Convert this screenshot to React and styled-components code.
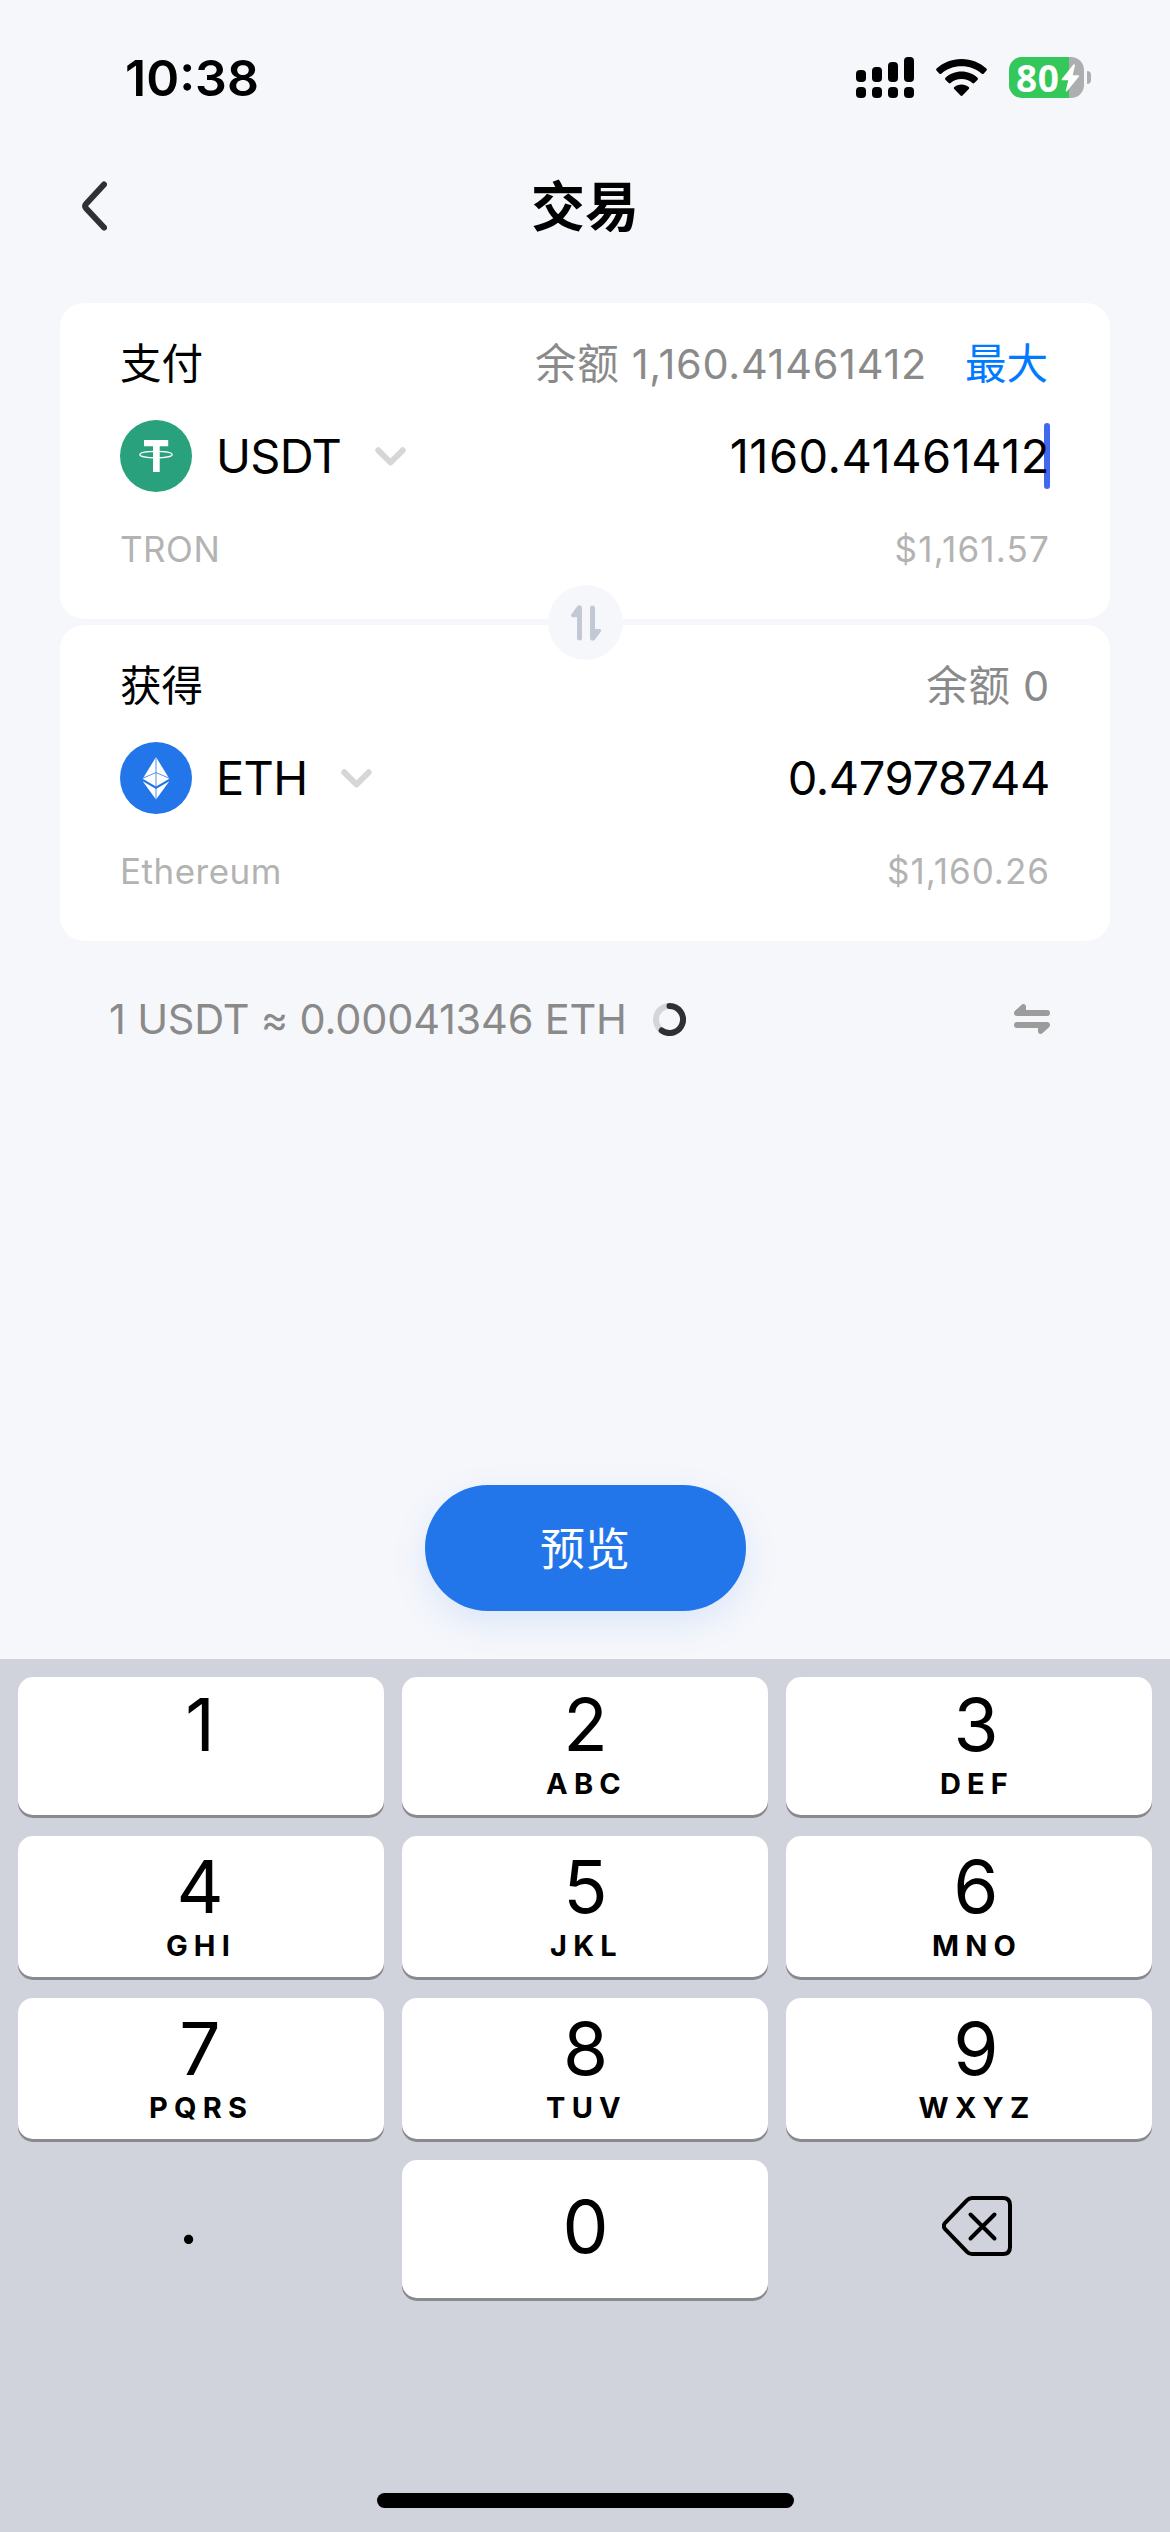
import React, { useState } from 'react';
import styled, { createGlobalStyle } from 'styled-components';

const GlobalStyle = createGlobalStyle`
  * {
    box-sizing: border-box;
  }

  body {
    margin: 0;
    background-color: #f6f7fb;
    color: #000;
    font-family: Inter, "Noto Sans CJK SC", sans-serif;
  }

  button {
    padding: 0;
    border: none;
    background: none;
    font: inherit;
    color: inherit;
  }

  svg {
    display: block;
  }
`;

const Screen = styled.div`
  display: flex;
  flex-direction: column;
  width: 1170px;
  height: 2532px;
  overflow: hidden;
`;

const StatusBar = styled.div`
  display: flex;
  align-items: center;
  justify-content: space-between;
  height: 141px;
  padding: 14px 79px 0 125px;
`;

const Time = styled.span`
  font-size: 50px;
  font-weight: 600;
  line-height: 60px;
`;

const StatusIcons = styled.div`
  display: flex;
  align-items: center;
  gap: 22px;
`;

const Battery = styled.div`
  display: flex;
  align-items: center;
  gap: 3px;
`;

const BatteryBody = styled.div`
  display: flex;
  align-items: center;
  width: 75px;
  height: 41px;
  padding-left: 7px;
  border-radius: 13px;
  background: linear-gradient(to right, #34c759 60px, #adaeb0 60px);
  color: #fff;
`;

const BatteryLevel = styled.span`
  width: 45px;
  font-family: "Noto Sans", sans-serif;
  font-size: 37px;
  font-weight: 700;
  line-height: 41px;
  letter-spacing: 0.5px;
`;

const BatteryCap = styled.div`
  width: 4px;
  height: 13px;
  border-radius: 0 4px 4px 0;
  background-color: #adaeb0;
`;

const Header = styled.div`
  display: grid;
  grid-template-columns: 1fr auto 1fr;
  align-items: center;
  height: 162px;
  padding: 0 82px;
`;

const BackButton = styled.button`
  justify-self: start;
  margin-top: -32px;
`;

const Title = styled.h1`
  margin: -28px 0 0;
  font-size: 54px;
  font-weight: 600;
  line-height: 78px;
`;

const Cards = styled.div`
  position: relative;
  display: flex;
  flex-direction: column;
  gap: 6px;
  margin: 0 60px;
`;

const Card = styled.div`
  display: flex;
  flex-direction: column;
  height: 316px;
  padding: 31px 60px 0;
  border-radius: 24px;
  background-color: #fff;
`;

const CardRow = styled.div`
  display: flex;
  align-items: center;
  justify-content: space-between;
  height: ${(props) => props.$height}px;
`;

const CardLabel = styled.span`
  font-size: 41.5px;
  line-height: 60px;
`;

const Balance = styled.div`
  display: flex;
  gap: 38px;
  padding-right: ${(props) => (props.$hasMax ? 2 : 0)}px;
  color: #8a8a8a;
  font-size: 41.5px;
  line-height: 60px;
  letter-spacing: 0.7px;
`;

const MaxButton = styled.button`
  color: #007aff;
`;

const TokenButton = styled.button`
  display: flex;
  align-items: center;
`;

const Symbol = styled.span`
  margin: 0 34px 0 24px;
  font-size: 47px;
  line-height: 60px;
  letter-spacing: -0.7px;
`;

const Amount = styled.div`
  position: relative;
  z-index: 0;
  font-size: 47px;
  line-height: 66px;
  letter-spacing: ${(props) => props.$spacing}px;
`;

const Cursor = styled.span`
  position: absolute;
  top: 0;
  right: 0;
  z-index: -1;
  width: 6px;
  height: 66px;
  border-radius: 3px;
  background-color: #4169f0;
`;

const SubText = styled.span`
  color: #b3b3b3;
  font-size: 35px;
  line-height: 50px;
  letter-spacing: ${(props) => props.$spacing}px;
`;

const SwapButton = styled.button`
  position: absolute;
  top: 282px;
  left: 488px;
  display: flex;
  align-items: center;
  justify-content: center;
  width: 75px;
  height: 75px;
  border-radius: 50%;
  background-color: #f6f7fb;
`;

const RateRow = styled.div`
  display: flex;
  align-items: center;
  justify-content: space-between;
  height: 156px;
  padding: 0 120px 0 109px;
`;

const Rate = styled.div`
  display: flex;
  align-items: center;
  gap: 26px;
  color: #8a8a8a;
  font-size: 41.5px;
  line-height: 60px;
  letter-spacing: -0.2px;
`;

const PreviewButton = styled.button`
  align-self: center;
  width: 321px;
  height: 126px;
  margin: auto 0 48px;
  padding-bottom: 4px;
  border-radius: 63px;
  background-color: #2376ea;
  box-shadow: 0 12px 36px rgba(35, 118, 234, 0.12);
  color: #fff;
  font-size: 45px;
`;

const Keyboard = styled.div`
  display: flex;
  flex-direction: column;
  align-items: center;
  justify-content: space-between;
  height: 873px;
  padding: 18px 18px 24px;
  background-color: #d0d3dc;
`;

const Keys = styled.div`
  display: grid;
  grid-template-columns: repeat(3, 366px);
  grid-template-rows: 138px 141px 141px 138px;
  gap: 21px 18px;
`;

const Key = styled.button`
  display: flex;
  flex-direction: column;
  align-items: center;
  justify-content: ${(props) => (props.$centered ? 'center' : 'flex-end')};
  padding-bottom: ${(props) => (props.$centered ? 4 : 13)}px;
  border-radius: 15px;
  background-color: #fff;
  box-shadow: 0 3px 0 #898a8e;

  &:nth-child(3n + 2) {
    padding-left: 3px;
  }

  &:nth-child(3n) {
    padding-left: 16px;
  }
`;

const PlainKey = styled(Key)`
  padding-bottom: 7px;
  background: none;
  box-shadow: none;
`;

const Digit = styled.span`
  margin-bottom: ${(props) => (props.$raised ? 2 : 0)}px;
  padding-right: 2px;
  font-size: 73px;
  font-weight: 400;
  line-height: 78px;
`;

const Letters = styled.span`
  height: 36px;
  font-size: 29px;
  font-weight: 700;
  line-height: 36px;
  letter-spacing: 6.2px;
`;

const Point = styled.span`
  padding: 0 25px 14px 0;
  font-size: 70px;
  line-height: 72px;
`;

const HomeIndicator = styled.div`
  width: 417px;
  height: 15px;
  border-radius: 8px;
  background-color: #000;
`;

const SignalIcon = () => (
  <svg width="58" height="41" viewBox="0 0 58 41">
    {[13, 10, 5, 0].map((top, i) => (
      <g key={top}>
        <rect x={i * 16} y={top} width="10" height={25 - top} rx="4" />
        <rect x={i * 16} y="30" width="10" height="11" rx="4" />
      </g>
    ))}
  </svg>
);

const WifiIcon = () => (
  <svg width="51" height="37" viewBox="0 0 51 37">
    <path d="M25.5 0C35.2 0 44 3.7 50.4 9.6c.6.6.6 1.4.1 2L47.6 14.7c-.5.5-1.3.5-1.9 0C40.4 9.9 33.2 7.3 25.5 7.3S10.6 9.9 5.3 14.7c-.6.5-1.4.5-1.9 0L.5 11.6c-.5-.6-.5-1.4.1-2C7 3.7 15.800 0 25.5 0z" />
    <path d="M25.5 12.6c6.2 0 11.8 2.3 16 6.2.6.5.6 1.3.1 1.9l-3.3 3.4c-.5.5-1.3.5-1.9 0-2.9-2.6-6.7-4.1-10.9-4.1s-8 1.5-10.9 4.1c-.6.5-1.4.5-1.9 0l-3.300-3.400c-.5-.6-.5-1.400.1-1.900 4.200-3.900 9.800-6.200 16-6.200z" />
    <path d="M25.5 25.4c2.8 0 5.3 1 7.200 2.700.6.5.6 1.300.1 1.900l-6.300 6.500c-.6.6-1.400.6-2 0L18.200 30c-.5-.6-.5-1.400.1-1.900 1.900-1.700 4.400-2.700 7.200-2.700z" />
  </svg>
);

const BoltIcon = () => (
  <svg width="19" height="28" viewBox="0 0 19 28">
    <path
      d="M12.200.8.800 15.100c-.4.6-.1 1.200.6 1.200h5.900L4.800 26.300c-.3 1.200.7 1.600 1.400.7L18 12.600c.5-.6.200-1.300-.6-1.300h-5.700l2.200-9.700c.2-1.100-.9-1.700-1.700-.8z"
      fill="#fff"
    />
  </svg>
);

const BackIcon = () => (
  <svg width="25" height="50" viewBox="0 0 25 50" fill="none">
    <path
      d="M22 3.500 4.200 22.800c-1.400 1.600-1.400 3.200 0 4.800L22 46.500"
      stroke="#2f3033"
      strokeWidth="6"
      strokeLinecap="round"
    />
  </svg>
);

const ChevronIcon = () => (
  <svg width="31" height="19" viewBox="0 0 31 19" fill="none">
    <path
      d="M3.300 3.300 15.500 15.500 27.700 3.300"
      stroke="#d6d6d6"
      strokeWidth="6"
      strokeLinecap="round"
      strokeLinejoin="round"
    />
  </svg>
);

const TetherIcon = () => (
  <svg width="72" height="72" viewBox="0 0 72 72">
    <circle cx="36" cy="36" r="36" fill="#28a17c" />
    <path d="M24 20h24.200v6.200H39.700V52H33V26.200h-9z" fill="#fff" />
    <ellipse cx="36" cy="34.600" rx="16.200" ry="3.300" fill="none" stroke="#fff" strokeWidth="1.200" />
  </svg>
);

const EthIcon = () => (
  <svg width="72" height="72" viewBox="0 0 72 72">
    <circle cx="36" cy="36" r="36" fill="#2376ea" />
    <path d="M36 15 49.300 36.700 36 44.400 22.700 36.700z" fill="#fff" />
    <path d="M22.700 39.300 36 47l13.300-7.700L36 57.500z" fill="#fff" />
    <path d="M36 15v42.500M22.700 36.200 36 30.600l13.300 5.600" fill="none" stroke="#2376ea" strokeWidth="0.800" />
  </svg>
);

const SwapVerticalIcon = () => (
  <svg width="30" height="36" viewBox="0 0 30 36" fill="#c3c9d4">
    <path d="M6.200 1.200C8-.6 11 .2 11 2.900v30a2.500 2.500 0 0 1-5 0V12.200H1.800c-1.800 0-2.400-1.600-1.300-3z" />
    <path d="M23.800 34.800c-1.800 1.800-4.800 1-4.800-1.700v-30a2.500 2.500 0 0 1 5 0V24h4.200c1.800 0 2.400 1.500 1.300 2.900z" />
  </svg>
);

const SwapHorizontalIcon = () => (
  <svg width="36" height="30" viewBox="0 0 36 30" fill="#9c9c9c">
    <path d="M1 6.800 7.600.8C9.300-.7 12 .3 12 2.600V6h21a3 3 0 0 1 0 6H3C0 12-1 8.900 1 6.800z" />
    <path d="m35 23.200-6.600 6c-1.700 1.500-4.400.5-4.400-1.800V24H3a3 3 0 0 1 0-6h30c3 0 4 3.100 2 5.200z" />
  </svg>
);

const Spinner = () => (
  <svg width="33" height="33" viewBox="0 0 33 33" fill="none" strokeWidth="6">
    <circle cx="16.500" cy="16.500" r="13.500" stroke="#d4d5d7" />
    <path d="M16.500 3a13.500 13.500 0 1 1-7.800 24.500" stroke="#2f3033" strokeLinecap="round" />
  </svg>
);

const BackspaceIcon = () => (
  <svg width="70" height="60" viewBox="0 0 70 60" fill="none" stroke="#000" strokeWidth="4">
    <path d="M30 2h31c4.500 0 7 2.500 7 7v42c0 4.500-2.500 7-7 7H30c-2 0-3.500-.7-4.900-2.200L3.400 33.500c-2-2.200-2-4.800 0-7L25.100 4.200C26.500 2.700 28 2 30 2z" />
    <path d="m28.500 18.500 24 24m0-24-24 24" strokeLinecap="round" />
  </svg>
);

const KEYS = [
  ['1', ''],
  ['2', 'ABC'],
  ['3', 'DEF'],
  ['4', 'GHI'],
  ['5', 'JKL'],
  ['6', 'MNO'],
  ['7', 'PQRS'],
  ['8', 'TUV'],
  ['9', 'WXYZ'],
];

const App = () => {
  const [amount, setAmount] = useState('1160.41461412');

  const handleKey = (key) => {
    setAmount((prev) => prev + key);
  };

  const handleDelete = () => {
    setAmount((prev) => prev.slice(0, -1));
  };

  return (
    <Screen>
      <GlobalStyle />
      <StatusBar>
        <Time>10:38</Time>
        <StatusIcons>
          <SignalIcon />
          <WifiIcon />
          <Battery>
            <BatteryBody>
              <BatteryLevel>80</BatteryLevel>
              <BoltIcon />
            </BatteryBody>
            <BatteryCap />
          </Battery>
        </StatusIcons>
      </StatusBar>

      <Header>
        <BackButton aria-label="返回">
          <BackIcon />
        </BackButton>
        <Title>交易</Title>
      </Header>

      <Cards>
        <Card>
          <CardRow $height={60}>
            <CardLabel>支付</CardLabel>
            <Balance $hasMax>
              <span>余额 1,160.41461412</span>
              <MaxButton onClick={() => setAmount('1160.41461412')}>最大</MaxButton>
            </Balance>
          </CardRow>
          <CardRow $height={124}>
            <TokenButton>
              <TetherIcon />
              <Symbol>USDT</Symbol>
              <ChevronIcon />
            </TokenButton>
            <Amount $spacing={0.5}>
              {amount}
              <Cursor />
            </Amount>
          </CardRow>
          <CardRow $height={62}>
            <SubText $spacing={0.5}>TRON</SubText>
            <SubText $spacing={1.2}>$1,161.57</SubText>
          </CardRow>
        </Card>
        <Card>
          <CardRow $height={60}>
            <CardLabel>获得</CardLabel>
            <Balance>余额 0</Balance>
          </CardRow>
          <CardRow $height={124}>
            <TokenButton>
              <EthIcon />
              <Symbol>ETH</Symbol>
              <ChevronIcon />
            </TokenButton>
            <Amount $spacing={-0.4}>0.47978744</Amount>
          </CardRow>
          <CardRow $height={62}>
            <SubText $spacing={0.5}>Ethereum</SubText>
            <SubText $spacing={1}>$1,160.26</SubText>
          </CardRow>
        </Card>
        <SwapButton aria-label="切换">
          <SwapVerticalIcon />
        </SwapButton>
      </Cards>

      <RateRow>
        <Rate>
          <span>1 USDT ≈ 0.00041346 ETH</span>
          <Spinner />
        </Rate>
        <SwapHorizontalIcon />
      </RateRow>

      <PreviewButton>预览</PreviewButton>

      <Keyboard>
        <Keys>
          {KEYS.map(([digit, letters]) => (
            <Key key={digit} onClick={() => handleKey(digit)}>
              <Digit $raised>{digit}</Digit>
              <Letters>{letters}</Letters>
            </Key>
          ))}
          <PlainKey $centered onClick={() => handleKey('.')}>
            <Point>.</Point>
          </PlainKey>
          <Key $centered onClick={() => handleKey('0')}>
            <Digit>0</Digit>
          </Key>
          <PlainKey $centered aria-label="删除" onClick={handleDelete}>
            <BackspaceIcon />
          </PlainKey>
        </Keys>
        <HomeIndicator />
      </Keyboard>
    </Screen>
  );
};

export default App;
